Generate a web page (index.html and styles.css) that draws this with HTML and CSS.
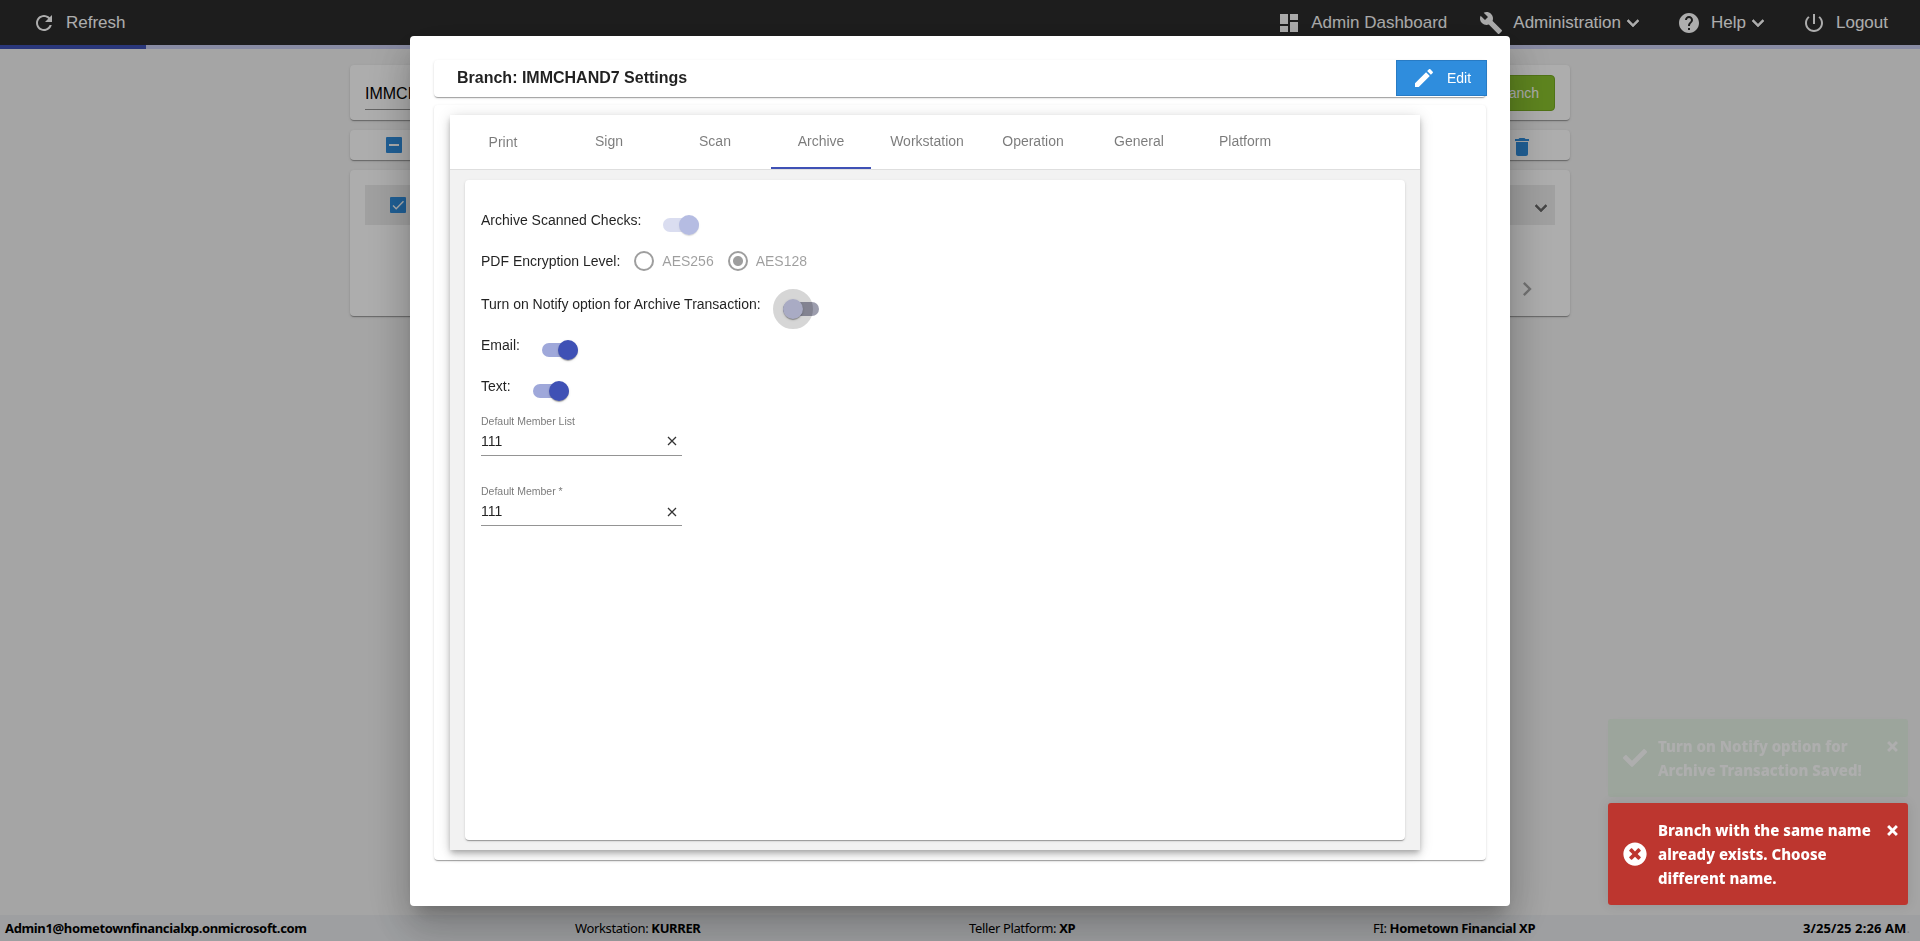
FILE: index.html
```html
<!DOCTYPE html>
<html lang="en">
<head>
  <meta charset="UTF-8">
  <title>Branch Settings</title>
  <link rel="stylesheet" href="styles.css">
</head>
<body>

  <div class="page">
    <nav class="navbar">
      <a class="nav-item">
        <svg class="icon" viewBox="0 0 24 24"><path d="M17.65 6.35C16.2 4.9 14.21 4 12 4c-4.42 0-7.99 3.58-7.99 8s3.57 8 7.99 8c3.73 0 6.84-2.55 7.73-6h-2.08c-.82 2.33-3.04 4-5.65 4-3.31 0-6-2.69-6-6s2.69-6 6-6c1.66 0 3.14.69 4.22 1.78L13 11h7V4l-2.35 2.35z"/></svg>
        <span>Refresh</span>
      </a>
      <div class="spacer"></div>
      <a class="nav-item">
        <svg class="icon" viewBox="0 0 24 24"><path d="M3 13h8V3H3v10zm0 8h8v-6H3v6zm10 0h8V11h-8v10zm0-18v6h8V3h-8z"/></svg>
        <span>Admin Dashboard</span>
      </a>
      <a class="nav-item">
        <svg class="icon" viewBox="0 0 24 24"><path d="M22.7 19l-9.1-9.1c.9-2.3.4-5-1.5-6.9-2-2-5-2.4-7.4-1.3L9 6 6 9 1.6 4.7C.4 7.1.9 10.1 2.9 12.1c1.9 1.9 4.6 2.4 6.9 1.5l9.1 9.1c.4.4 1 .4 1.4 0l2.3-2.3c.5-.4.5-1.1.1-1.4z"/></svg>
        <span>Administration</span>
        <svg class="icon arrow" viewBox="0 0 24 24"><path d="M16.59 8.59L12 13.17 7.41 8.59 6 10l6 6 6-6z"/></svg>
      </a>
      <a class="nav-item">
        <svg class="icon" viewBox="0 0 24 24"><path d="M12 2C6.48 2 2 6.48 2 12s4.48 10 10 10 10-4.48 10-10S17.52 2 12 2zm1 17h-2v-2h2v2zm2.07-7.75l-.9.92C13.45 12.9 13 13.5 13 15h-2v-.5c0-1.1.45-2.1 1.17-2.83l1.24-1.26c.37-.36.59-.86.59-1.41 0-1.1-.9-2-2-2s-2 .9-2 2H8c0-2.21 1.79-4 4-4s4 1.79 4 4c0 .88-.36 1.68-.93 2.25z"/></svg>
        <span>Help</span>
        <svg class="icon arrow" viewBox="0 0 24 24"><path d="M16.59 8.59L12 13.17 7.41 8.59 6 10l6 6 6-6z"/></svg>
      </a>
      <a class="nav-item">
        <svg class="icon" viewBox="0 0 24 24"><path d="M13 3h-2v10h2V3zm4.83 2.17l-1.42 1.42C17.99 7.86 19 9.81 19 12c0 3.87-3.13 7-7 7s-7-3.13-7-7c0-2.19 1.01-4.14 2.58-5.42L6.17 5.17C4.23 6.82 3 9.26 3 12c0 4.97 4.03 9 9 9s9-4.03 9-9c0-2.74-1.23-5.18-3.17-6.83z"/></svg>
        <span>Logout</span>
      </a>
    </nav>
    <div class="progress"><div class="progress-fill"></div></div>

    <main class="content">
      <div class="card search-card">
        <div class="search-input">IMMCHAND7</div>
        <button class="add-btn">Add Branch</button>
      </div>
      <div class="card tools-card">
        <svg class="checkbox" viewBox="0 0 16 16"><rect width="16" height="16" rx="1"/><path d="M3 8h10"/></svg>
        <svg class="icon delete" viewBox="0 0 24 24"><path d="M6 19c0 1.1.9 2 2 2h8c1.1 0 2-.9 2-2V7H6v12zM19 4h-3.5l-1-1h-5l-1 1H5v2h14V4z"/></svg>
      </div>
      <div class="card list-card">
        <div class="list-row">
          <svg class="checkbox" viewBox="0 0 16 16"><rect width="16" height="16" rx="1"/><path class="tick" d="M3 8.6l3.2 3.2L13.5 4.3"/></svg>
          <svg class="icon arrow expand" viewBox="0 0 24 24"><path d="M16.59 8.59L12 13.17 7.41 8.59 6 10l6 6 6-6z"/></svg>
        </div>
        <div class="paginator">
          <svg class="next" viewBox="0 0 24 24"><path d="M10 6L8.59 7.41 13.17 12l-4.58 4.59L10 18l6-6z"/></svg>
        </div>
      </div>
    </main>

    <footer class="footer">
      <div><b>Admin1@hometownfinancialxp.onmicrosoft.com</b></div>
      <div>Workstation: <b>KURRER</b></div>
      <div>Teller Platform: <b>XP</b></div>
      <div>FI: <b>Hometown Financial XP</b></div>
      <div class="date"><b>3/25/25 2:26 AM</b><span class="dot">.</span></div>
    </footer>
  </div>

  <div class="overlay">
    <div class="dialog">
      <div class="card dialog-header">
        <h1>Branch: IMMCHAND7 Settings</h1>
        <button class="edit-btn">
          <svg class="icon" viewBox="0 0 24 24"><path d="M3 17.25V21h3.75L17.81 9.94l-3.75-3.75L3 17.25zM20.71 7.04c.39-.39.39-1.02 0-1.41l-2.34-2.34c-.39-.39-1.02-.39-1.41 0l-1.83 1.83 3.75 3.75 1.83-1.83z"/></svg>
          <span>Edit</span>
        </button>
      </div>

      <div class="card dialog-body">
        <div class="tab-group">
          <div class="tabs">
            <div class="tab first">Print</div>
            <div class="tab">Sign</div>
            <div class="tab">Scan</div>
            <div class="tab active">Archive</div>
            <div class="tab">Workstation</div>
            <div class="tab">Operation</div>
            <div class="tab">General</div>
            <div class="tab">Platform</div>
          </div>

          <div class="card panel">
            <div class="row">
              <span class="label">Archive Scanned Checks:</span>
              <div class="toggle on disabled"><div class="thumb"></div></div>
            </div>
            <div class="row radio-row">
              <span class="label">PDF Encryption Level:</span>
              <div class="radio"></div><span class="radio-label">AES256</span>
              <div class="radio checked"></div><span class="radio-label">AES128</span>
            </div>
            <div class="row">
              <span class="label">Turn on Notify option for Archive Transaction:</span>
              <div class="toggle off"><div class="thumb"></div></div>
            </div>
            <div class="row">
              <span class="label">Email:</span>
              <div class="toggle on"><div class="thumb"></div></div>
            </div>
            <div class="row">
              <span class="label">Text:</span>
              <div class="toggle on"><div class="thumb"></div></div>
            </div>

            <div class="field">
              <label>Default Member List</label>
              <div class="field-input">
                <span>111</span>
                <svg class="clear" viewBox="0 0 10 10"><path d="M1 1l8 8M9 1l-8 8"/></svg>
              </div>
            </div>
            <div class="field">
              <label>Default Member *</label>
              <div class="field-input">
                <span>111</span>
                <svg class="clear low" viewBox="0 0 10 10"><path d="M1 1l8 8M9 1l-8 8"/></svg>
              </div>
            </div>
          </div>
        </div>
      </div>
    </div>
  </div>

  <div class="toasts">
    <div class="toast success">
      <svg class="toast-icon" viewBox="0 0 512 512"><path d="M173.898 439.404l-166.4-166.4c-9.997-9.997-9.997-26.206 0-36.204l36.203-36.204c9.997-9.998 26.207-9.998 36.204 0L192 312.69 432.095 72.596c9.997-9.997 26.207-9.997 36.204 0l36.203 36.204c9.997 9.997 9.997 26.206 0 36.204l-294.4 294.401c-9.998 9.997-26.207 9.997-36.204-.001z"/></svg>
      <div class="toast-text">Turn on Notify option for<br>Archive Transaction Saved!</div>
      <svg class="toast-close" viewBox="0 0 10 10"><path d="M1 1l8 8M9 1l-8 8"/></svg>
    </div>
    <div class="toast error">
      <svg class="toast-icon" viewBox="0 0 512 512"><path d="M256 8C119 8 8 119 8 256s111 248 248 248 248-111 248-248S393 8 256 8zm121.6 313.1c4.7 4.7 4.7 12.3 0 17L338 377.6c-4.7 4.7-12.3 4.7-17 0L256 312l-65.1 65.6c-4.7 4.7-12.3 4.7-17 0L134.4 338c-4.7-4.7-4.7-12.3 0-17l65.6-65-65.6-65.1c-4.7-4.7-4.7-12.3 0-17l39.6-39.6c4.7-4.7 12.3-4.7 17 0l65 65.7 65.1-65.6c4.7-4.7 12.3-4.7 17 0l39.6 39.6c4.7 4.7 4.7 12.3 0 17L312 256l65.6 65.1z"/></svg>
      <div class="toast-text">Branch with the same name<br>already exists. Choose<br>different name.</div>
      <svg class="toast-close" viewBox="0 0 10 10"><path d="M1 1l8 8M9 1l-8 8"/></svg>
    </div>
  </div>

</body>
</html>
```
FILE: styles.css
```css
* {
  box-sizing: border-box;
}

body {
  margin: 0;
  font-family: "Liberation Sans", Arial, sans-serif;
  font-size: 14px;
  color: rgba(0, 0, 0, 0.87);
}

button {
  font-family: inherit;
  font-size: 14px;
  color: white;
}

.page {
  height: 100vh;
  display: flex;
  flex-direction: column;
  background: #f3f3f3;
  overflow: hidden;
}

.icon {
  width: 24px;
  height: 24px;
  fill: currentColor;
  flex: none;
}

.navbar {
  display: flex;
  height: 45px;
  padding: 0 16px;
  background: #2c2c2c;
  color: #fff;
  font-size: 17px;
}

.spacer {
  flex: 1;
}

.nav-item {
  display: flex;
  align-items: center;
  padding: 0 16px;
}

.nav-item span {
  margin-left: 10px;
  line-height: 46px;
  height: 45px;
}

.arrow {
  stroke: currentColor;
  stroke-width: 0.6;
}

.nav-item .arrow {
  margin-top: 1px;
}

.progress {
  height: 4px;
  background: #c9cdf0;
}

.progress-fill {
  width: 146px;
  height: 4px;
  background: #3f51b5;
}

.card {
  background: #fff;
  border-radius: 4px;
  box-shadow: 0 2px 1px -1px rgba(0, 0, 0, 0.2), 0 1px 1px 0 rgba(0, 0, 0, 0.14), 0 1px 3px 0 rgba(0, 0, 0, 0.12);
}

.content {
  width: 1220px;
  flex: 1;
  margin: 16px auto 0;
  display: flex;
  flex-direction: column;
  gap: 10px;
}

.search-card {
  height: 55px;
  padding: 10px 15px;
  display: flex;
  justify-content: space-between;
}

.search-input {
  width: 200px;
  height: 35px;
  font-size: 16px;
  line-height: 38px;
  color: #000;
  border-bottom: 1px solid #949494;
}

.add-btn {
  height: 36px;
  padding: 0 15px;
  background: #8bc32e;
  border: 1px solid #77aa22;
  border-radius: 4px;
}

.tools-card {
  height: 30px;
  padding: 0 36px;
  display: flex;
  align-items: center;
  justify-content: space-between;
  color: #2f8ddd;
}

.tools-card .delete {
  margin-top: 4px;
}

.checkbox {
  width: 16px;
  height: 16px;
  fill: #2f8ddd;
}

.checkbox path {
  fill: none;
  stroke: #fff;
  stroke-width: 2;
}

.checkbox .tick {
  stroke-width: 1.4;
}

.list-card {
  height: 146px;
  padding: 15px;
}

.list-row {
  height: 40px;
  background: #ececec;
  display: flex;
  align-items: center;
  justify-content: space-between;
  padding: 0 2px 0 25px;
  color: #666;
}

.list-row .expand {
  margin-top: 5px;
}

.paginator {
  display: flex;
  justify-content: flex-end;
  padding: 50px 14px 0;
}

.next {
  width: 28px;
  height: 28px;
  fill: #aaa;
}

.footer {
  height: 26px;
  padding: 0 10px 0 5px;
  display: grid;
  grid-template-columns: 570px 394px 404px 1fr auto;
  background: #e9ebee;
  font-family: "Noto Sans", "Segoe UI", sans-serif;
  font-size: 13px;
  line-height: 27px;
  letter-spacing: -0.36px;
  color: #000;
  white-space: nowrap;
}

.footer .date {
  letter-spacing: 0.1px;
}

.footer .dot {
  color: #bbb;
}

/* dialog */
.overlay {
  position: fixed;
  inset: 0;
  display: flex;
  justify-content: center;
  align-items: flex-start;
  padding-top: 36px;
  background: rgba(0, 0, 0, 0.32);
}

.dialog {
  width: 1100px;
  height: 870px;
  padding: 24px;
  background: #fff;
  border-radius: 4px;
  box-shadow: 0 11px 15px -7px rgba(0, 0, 0, 0.2), 0 24px 38px 3px rgba(0, 0, 0, 0.14), 0 9px 46px 8px rgba(0, 0, 0, 0.12);
}

.dialog-header {
  height: 37px;
  display: flex;
  justify-content: space-between;
  align-items: flex-start;
  padding-left: 23px;
}

.dialog-header h1 {
  margin: 0;
  font-size: 16px;
  line-height: 35px;
}

.edit-btn {
  width: 91px;
  height: 36px;
  margin-right: -1px;
  display: flex;
  align-items: center;
  gap: 11px;
  padding: 0 15px;
  background: #2f8ddd;
  border: 1px solid #287bc4;
}

.dialog-body {
  height: 755px;
  margin-top: 8px;
  padding: 10px 16px;
}

.tab-group {
  width: 970px;
  height: 735px;
  background: #f2f2f2;
  box-shadow: 0 3px 5px -1px rgba(0, 0, 0, 0.2), 0 5px 8px 0 rgba(0, 0, 0, 0.14), 0 1px 14px 0 rgba(0, 0, 0, 0.12);
}

.tabs {
  display: flex;
  gap: 6px;
  height: 55px;
  padding-left: 3px;
  background: #fff;
  border-bottom: 1px solid #dedede;
}

.tab {
  width: 100px;
  height: 54px;
  line-height: 52px;
  text-align: center;
  color: rgba(0, 0, 0, 0.52);
}

.tab.first {
  line-height: 54px;
}

.tab.active {
  border-bottom: 2px solid #3f51b5;
}

.panel {
  height: 660px;
  margin: 10px 15px;
  padding: 20px 16px;
}

.row {
  display: flex;
  align-items: center;
  height: 41px;
}

.label {
  margin-top: -2px;
}

.radio-row {
  height: 43px;
  padding-bottom: 4px;
}

.radio-row .label {
  margin-top: 0;
}

.toggle {
  width: 36px;
  height: 14px;
  margin: 9px 0 0 22px;
  border-radius: 8px;
  background: #9fa8da;
  display: flex;
  align-items: center;
  justify-content: flex-end;
}

.thumb {
  width: 20px;
  height: 20px;
  flex: none;
  border-radius: 50%;
  background: #3f51b5;
  box-shadow: 0 2px 1px -1px rgba(0, 0, 0, 0.2), 0 1px 1px 0 rgba(0, 0, 0, 0.14), 0 1px 3px 0 rgba(0, 0, 0, 0.12);
}

.toggle.disabled {
  opacity: 0.38;
}

.toggle.off {
  background: #9c9dad;
  justify-content: flex-start;
}

/* hover ripple round the thumb */
.toggle.off .thumb {
  background: #a9abc4;
  outline: 10px solid rgba(0, 0, 0, 0.16);
}

.radio {
  width: 20px;
  height: 20px;
  margin-left: 14px;
  border: 2px solid #9e9e9e;
  border-radius: 50%;
}

.radio.checked {
  background: radial-gradient(circle, #9e9e9e 4.5px, transparent 5.5px);
}

.radio-label {
  margin-left: 8px;
  color: rgba(0, 0, 0, 0.38);
}

.field {
  width: 201px;
  height: 70px;
}

.field label {
  display: block;
  padding-top: 7px;
  font-size: 10.5px;
  line-height: 14px;
  color: rgba(0, 0, 0, 0.54);
}

.field-input {
  display: flex;
  justify-content: space-between;
  align-items: center;
  height: 28px;
  padding: 0 5px 2px 0;
  border-bottom: 1px solid #949494;
}

.clear {
  width: 10px;
  height: 10px;
  stroke: #333;
  stroke-width: 1.3;
}

.clear.low {
  margin-top: 2px;
}

/* toasts */
.toasts {
  position: fixed;
  right: 12px;
  bottom: 36px;
  width: 300px;
  display: flex;
  flex-direction: column;
  gap: 6px;
}

.toast {
  display: flex;
  align-items: center;
  padding: 15px 10px 15px 15px;
  border-radius: 3px;
  color: #fff;
  font-family: "Noto Sans", "Segoe UI", sans-serif;
  font-size: 15px;
  font-weight: 800;
  line-height: 24px;
  box-shadow: 0 0 12px rgba(0, 0, 0, 0.1);
  white-space: nowrap;
}

.success {
  background: #51a351;
  opacity: 0.1;
}

.error {
  background: #bd362f;
}

.toast-icon {
  width: 24px;
  height: 24px;
  flex: none;
  fill: #fff;
}

.toast-text {
  flex: 1;
  margin-left: 11px;
}

.toast-close {
  width: 11px;
  height: 11px;
  flex: none;
  align-self: flex-start;
  margin-top: 7px;
  stroke: #fff;
  stroke-width: 2.6;
}
```
